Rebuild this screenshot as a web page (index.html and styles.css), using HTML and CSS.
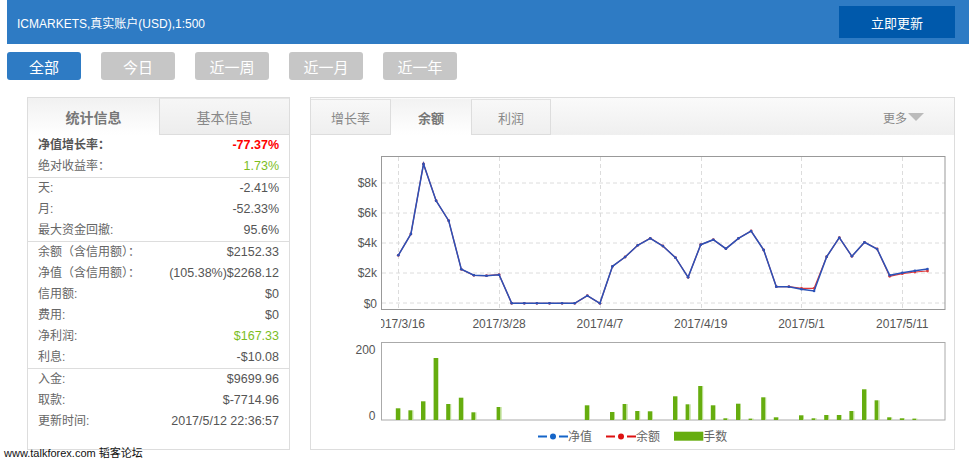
FILE: index.html
```html
<!DOCTYPE html>
<html lang="zh-CN">
<head>
<meta charset="utf-8">
<title>ICMARKETS</title>
<link rel="stylesheet" href="styles.css">
</head>
<body>
<header class="header">
  <div class="title">ICMARKETS,真实账户(USD),1:500</div>
  <div class="update">立即更新</div>
</header>
<nav class="ranges">
  <div class="range active">全部</div>
  <div class="range">今日</div>
  <div class="range">近一周</div>
  <div class="range">近一月</div>
  <div class="range">近一年</div>
</nav>
<main class="content">
  <section class="stats">
    <div class="tabs">
      <div class="tab active">统计信息</div>
      <div class="tab">基本信息</div>
    </div>
    <div class="group">
      <div class="row strong"><span>净值增长率：</span><span class="val red">-77.37%</span></div>
      <div class="row"><span>绝对收益率：</span><span class="val green">1.73%</span></div>
    </div>
    <div class="group">
      <div class="row"><span>天:</span><span class="val">-2.41%</span></div>
      <div class="row"><span>月:</span><span class="val">-52.33%</span></div>
      <div class="row"><span>最大资金回撤:</span><span class="val">95.6%</span></div>
    </div>
    <div class="group">
      <div class="row"><span>余额（含信用额）：</span><span class="val">$2152.33</span></div>
      <div class="row"><span>净值（含信用额）：</span><span class="val">(105.38%)$2268.12</span></div>
      <div class="row"><span>信用额:</span><span class="val">$0</span></div>
      <div class="row"><span>费用:</span><span class="val">$0</span></div>
      <div class="row"><span>净利润:</span><span class="val green">$167.33</span></div>
      <div class="row"><span>利息:</span><span class="val">-$10.08</span></div>
    </div>
    <div class="group last">
      <div class="row"><span>入金:</span><span class="val">$9699.96</span></div>
      <div class="row"><span>取款:</span><span class="val">$-7714.96</span></div>
      <div class="row"><span>更新时间:</span><span class="val">2017/5/12 22:36:57</span></div>
    </div>
  </section>
  <section class="charts">
    <div class="ctabs">
      <div class="ctab first">增长率</div>
      <div class="ctab active">余额</div>
      <div class="ctab last">利润</div>
      <div class="more">更多<span class="tri"></span></div>
    </div>
    <svg class="chart" width="643" height="314" viewBox="311 135 643 314">
      <defs>
        <clipPath id="plot"><rect x="382" y="157" width="562" height="152"/></clipPath>
        <clipPath id="xl"><rect x="381" y="310" width="573" height="30"/></clipPath>
        <marker id="bdot" markerUnits="userSpaceOnUse" markerWidth="4" markerHeight="4" refX="2" refY="2"><circle cx="2" cy="2" r="1.3" fill="#2b52b8"/></marker>
        <marker id="rdot" markerUnits="userSpaceOnUse" markerWidth="4" markerHeight="4" refX="2" refY="2"><circle cx="2" cy="2" r="1.4" fill="#e03a3a"/></marker>
        <linearGradient id="bar" x1="0" x2="1" y1="0" y2="0">
          <stop offset="0" stop-color="#66ad0f"/><stop offset="0.78" stop-color="#66ad0f"/>
          <stop offset="0.78" stop-color="#b9dc90"/><stop offset="1" stop-color="#b9dc90"/>
        </linearGradient>
      </defs>
      <g class="grid">
        <line x1="382" x2="945" y1="183" y2="183"/>
        <line x1="382" x2="945" y1="213" y2="213"/>
        <line x1="382" x2="945" y1="243" y2="243"/>
        <line x1="382" x2="945" y1="273" y2="273"/>
        <line x1="382" x2="945" y1="303" y2="303"/>
        <line x1="398.5" x2="398.5" y1="157" y2="309"/>
        <line x1="499.5" x2="499.5" y1="157" y2="309"/>
        <line x1="600.5" x2="600.5" y1="157" y2="309"/>
        <line x1="701.5" x2="701.5" y1="157" y2="309"/>
        <line x1="801.5" x2="801.5" y1="157" y2="309"/>
        <line x1="902.5" x2="902.5" y1="157" y2="309"/>
      </g>
      <rect class="box" x="381.5" y="156.5" width="563.5" height="153"/>
      <g class="ylab">
        <text x="377" y="187">$8k</text>
        <text x="377" y="217">$6k</text>
        <text x="377" y="247">$4k</text>
        <text x="377" y="277">$2k</text>
        <text x="377" y="307.5">$0</text>
      </g>
      <g class="xlab" clip-path="url(#xl)">
        <text x="398.3" y="327.5">2017/3/16</text>
        <text x="499.1" y="327.5">2017/3/28</text>
        <text x="599.9" y="327.5">2017/4/7</text>
        <text x="700.7" y="327.5">2017/4/19</text>
        <text x="801.5" y="327.5">2017/5/1</text>
        <text x="902.3" y="327.5">2017/5/11</text>
      </g>
      <g clip-path="url(#plot)">
        <polyline class="red" marker-start="url(#rdot)" marker-mid="url(#rdot)" marker-end="url(#rdot)" points="398.3,255.3 410.9,234 423.5,164 436.1,200.7 448.7,220.7 461.3,269.3 473.9,275.3 486.5,275.7 499.1,274.7 511.7,303.3 524.3,303.3 536.9,303.3 549.5,303.3 562.1,303.3 574.7,303.3 587.3,295.7 599.9,303.3 612.5,266.3 625.1,257 637.7,245.3 650.3,238.3 662.9,246 675.5,257.7 688.1,277.3 700.7,244.7 713.3,239.7 725.9,248.7 738.5,238.3 751.1,231 763.7,250 776.3,286.7 788.9,286.7 801.5,288.3 814.1,288.3 826.7,256.7 839.3,237.7 851.9,256.3 864.5,242.3 877.1,249 889.7,276.3 902.3,273.7 914.9,272 927.5,271"/>
        <polyline class="blue" marker-start="url(#bdot)" marker-mid="url(#bdot)" marker-end="url(#bdot)" points="398.3,255.3 410.9,234 423.5,164 436.1,200.7 448.7,220.7 461.3,269.3 473.9,275.3 486.5,275.7 499.1,274.7 511.7,303.3 524.3,303.3 536.9,303.3 549.5,303.3 562.1,303.3 574.7,303.3 587.3,295.7 599.9,303.3 612.5,266.3 625.1,257 637.7,245.3 650.3,238.3 662.9,246 675.5,257.7 688.1,277.3 700.7,244.7 713.3,239.7 725.9,248.7 738.5,238.3 751.1,231 763.7,250 776.3,286.7 788.9,286.7 801.5,289.3 814.1,291 826.7,256.7 839.3,237.7 851.9,256.3 864.5,242.3 877.1,249 889.7,275.3 902.3,272.7 914.9,270.7 927.5,269"/>
      </g>
      <rect class="box light" x="381.5" y="342.5" width="563.5" height="77.5"/>
      <g class="ylab">
        <text x="375.5" y="353.5">200</text>
        <text x="375.5" y="419.5">0</text>
      </g>
      <g class="bars">
        <rect x="395.8" y="408.3" width="5" height="11.7"/>
        <rect x="408.4" y="410.3" width="5" height="9.7"/>
        <rect x="421" y="401.3" width="5" height="18.7"/>
        <rect x="433.6" y="358" width="5" height="62"/>
        <rect x="446.2" y="404" width="5" height="16"/>
        <rect x="458.8" y="397.7" width="5" height="22.3"/>
        <rect x="471.4" y="412.3" width="5" height="7.7"/>
        <rect x="496.6" y="407" width="5" height="13"/>
        <rect x="584.8" y="405.3" width="5" height="14.7"/>
        <rect x="610" y="412" width="5" height="8"/>
        <rect x="622.6" y="404" width="5" height="16"/>
        <rect x="635.2" y="411" width="5" height="9"/>
        <rect x="647.8" y="411.3" width="5" height="8.7"/>
        <rect x="673" y="396.3" width="5" height="23.7"/>
        <rect x="685.6" y="404.3" width="5" height="15.7"/>
        <rect x="698.2" y="386" width="5" height="34"/>
        <rect x="710.8" y="405.3" width="5" height="14.7"/>
        <rect x="723.4" y="418.3" width="5" height="1.7"/>
        <rect x="736" y="403.7" width="5" height="16.3"/>
        <rect x="748.6" y="418.6" width="5" height="1.4"/>
        <rect x="761.2" y="397.3" width="5" height="22.7"/>
        <rect x="773.8" y="417.3" width="5" height="2.7"/>
        <rect x="799" y="415.3" width="5" height="4.7"/>
        <rect x="811.6" y="418.3" width="5" height="1.7"/>
        <rect x="824.2" y="415" width="5" height="5"/>
        <rect x="836.8" y="415" width="5" height="5"/>
        <rect x="849.4" y="411" width="5" height="9"/>
        <rect x="862" y="389.3" width="5" height="30.7"/>
        <rect x="874.6" y="400.3" width="5" height="19.7"/>
        <rect x="887.2" y="417.3" width="5" height="2.7"/>
        <rect x="899.8" y="418.3" width="5" height="1.7"/>
        <rect x="912.4" y="418.6" width="5" height="1.4"/>
      </g>
      <g class="legend">
        <line class="lb" x1="538" x2="547" y1="436.5" y2="436.5"/>
        <circle cx="553" cy="436.5" r="3" fill="#1565c8"/>
        <line class="lb" x1="559" x2="568" y1="436.5" y2="436.5"/>
        <text x="568" y="441">净值</text>
        <line class="lr" x1="606" x2="615" y1="436.5" y2="436.5"/>
        <circle cx="621" cy="436.5" r="3" fill="#dd1111"/>
        <line class="lr" x1="627" x2="636" y1="436.5" y2="436.5"/>
        <text x="636" y="441">余额</text>
        <rect x="674" y="431.7" width="29.3" height="9" fill="#66ad0f"/>
        <text x="703.3" y="441">手数</text>
      </g>
    </svg>
  </section>
</main>
<div class="watermark">www.talkforex.com 韬客论坛</div>
</body>
</html>
```
FILE: styles.css
```css
* { box-sizing: border-box; }
html, body { margin: 0; }
body {
  padding-left: 7px;
  width: 969px;
  height: 464px;
  overflow: hidden;
  position: relative;
  background: #fff;
  font-family: "Liberation Sans", "Noto Sans CJK SC", sans-serif;
}
.header {
  height: 44px;
  background: #2e7bc4;
  display: flex;
  align-items: center;
  justify-content: space-between;
  padding: 0 14px 0 10px;
  color: #fff;
}
.title { font-size: 12px; }
.update {
  width: 116px;
  height: 32px;
  background: #0059ab;
  color: #fff;
  font-size: 13px;
  display: flex;
  align-items: center;
  justify-content: center;
}
.ranges {
  display: flex;
  gap: 20px;
  margin-top: 8px;
}
.range {
  width: 74px;
  height: 28px;
  border-radius: 3px;
  background: #c6c6c6;
  color: #fff;
  font-size: 15px;
  display: flex;
  align-items: center;
  justify-content: center;
}
.range.active { background: #2e7bc4; }
.content {
  display: flex;
  gap: 20px;
  margin: 17px 0 0 20px;
}
.stats {
  width: 263px;
  height: 353px;
  border: 1px solid #ddd;
}
.tabs {
  display: flex;
  height: 37px;
}
.tab {
  flex: 1;
  display: flex;
  align-items: center;
  justify-content: center;
  font-size: 14px;
  color: #888;
  background: linear-gradient(#f6f6f6, #ededed);
  border-left: 1px solid #ddd;
  border-top: 1px solid #e6e6e6;
  border-bottom: 1px solid #ddd;
}
.tab.active {
  flex: 0 0 131px;
  font-weight: bold;
  color: #777;
  background: linear-gradient(#f1f1f1, #fff);
  border: none;
}
.group { border-bottom: 1px solid #ddd; }
.group.last { border-bottom: none; }
.row {
  display: flex;
  justify-content: space-between;
  height: 21px;
  line-height: 21px;
  padding: 0 10px;
  font-size: 12px;
  color: #666;
}
.row.strong { font-weight: bold; color: #555; }
.val { font-size: 12.5px; color: #555; }
.red { color: #f00; }
.green { color: #7cbd1e; }
.charts {
  width: 645px;
  height: 353px;
  border: 1px solid #ddd;
  display: flex;
  flex-direction: column;
}
.ctabs {
  display: flex;
  height: 37px;
  background: linear-gradient(#fafafa, #efefef);
  padding-top: 1px;
}
.ctab {
  width: 80px;
  display: flex;
  align-items: center;
  justify-content: center;
  font-size: 13px;
  color: #888;
  background: linear-gradient(#f8f8f8, #efefef);
  border-top: 1px solid #e2e2e2;
  border-bottom: 1px solid #ddd;
}
.ctab.first { border-right: 1px solid #ddd; }
.ctab.last { border-left: 1px solid #ddd; border-right: 1px solid #ddd; }
.ctab.active {
  font-weight: bold;
  color: #777;
  background: linear-gradient(#f2f2f2, #fff);
  border: none;
}
.more {
  margin-left: auto;
  padding-right: 30px;
  display: flex;
  align-items: center;
  font-size: 12px;
  color: #888;
}
.tri {
  width: 0;
  height: 0;
  border-left: 8px solid transparent;
  border-right: 8px solid transparent;
  border-top: 8px solid #bbb;
  margin-left: 1px;
}
.chart { display: block; }
.grid line { stroke: #dcdcdc; stroke-width: 1; stroke-dasharray: 4 3; }
.box { fill: none; stroke: #999; stroke-width: 1; }
.box.light { stroke: #aaa; }
.ylab text { font-size: 12px; fill: #555; text-anchor: end; font-family: "Liberation Sans", sans-serif; }
.xlab text { font-size: 12px; fill: #555; text-anchor: middle; font-family: "Liberation Sans", sans-serif; }
.red, .blue { fill: none; }
polyline.red { stroke: #e03a3a; stroke-width: 1.2; }
polyline.blue { stroke: #2b52b8; stroke-width: 1.5; }
.bars rect { fill: url(#bar); }
.legend text { font-size: 12px; fill: #666; font-family: "Noto Sans CJK SC", sans-serif; }
.legend .lb { stroke: #1565c8; stroke-width: 2; }
.legend .lr { stroke: #dd1111; stroke-width: 2; }
.watermark {
  position: absolute;
  left: 4px;
  top: 446px;
  font-size: 11px;
  line-height: 14px;
  color: #111;
}
```
